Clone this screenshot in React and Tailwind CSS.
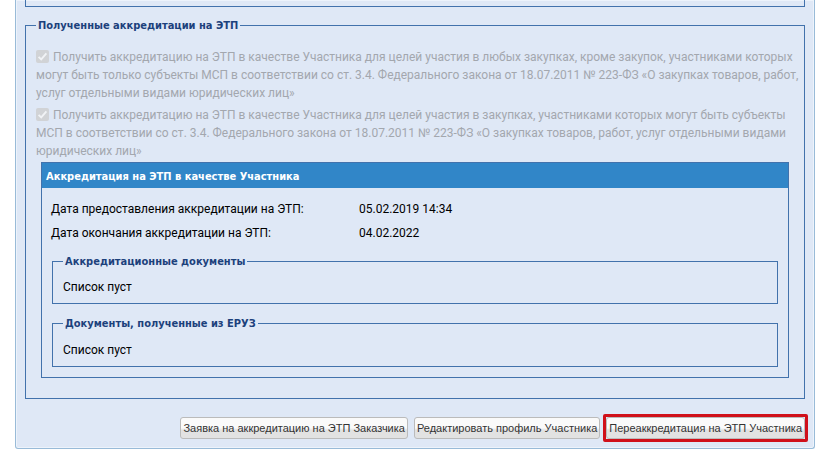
import React from "react";

const accreditations = [
  {
    id: "accr-any",
    lines: [
      "Получить аккредитацию на ЭТП в качестве Участника для целей участия в любых закупках, кроме закупок, участниками которых",
      "могут быть только субъекты МСП в соответствии со ст. 3.4. Федерального закона от 18.07.2011 № 223-ФЗ «О закупках товаров, работ,",
      "услуг отдельными видами юридических лиц»",
    ],
  },
  {
    id: "accr-msp",
    lines: [
      "Получить аккредитацию на ЭТП в качестве Участника для целей участия в закупках, участниками которых могут быть субъекты",
      "МСП в соответствии со ст. 3.4. Федерального закона от 18.07.2011 № 223-ФЗ «О закупках товаров, работ, услуг отдельными видами",
      "юридических лиц»",
    ],
  },
];

function Group({ title, className, children }) {
  return (
    <fieldset className={"min-w-0 border border-[#4272ac] " + className}>
      <legend className="ml-[10px] px-[2px] pt-[2px] font-['DejaVu_Sans_Condensed',sans-serif] text-[11px] leading-[14px] font-bold text-[#1c417c]">
        {title}
      </legend>
      {children}
    </fieldset>
  );
}

function Accreditation({ id, lines }) {
  return (
    <div className="leading-[18px] whitespace-nowrap text-[#a3a7ae]">
      <span className="mr-1 inline-grid size-[13px] align-[-2px]">
        <input
          id={id}
          type="checkbox"
          defaultChecked
          disabled
          className="col-start-1 row-start-1 size-[13px] appearance-none rounded-[2px] bg-[#d1d3d6]"
        />
        <svg viewBox="0 0 13 13" aria-hidden="true" className="pointer-events-none col-start-1 row-start-1 size-[13px]">
          <path d="M2.6 6.8 5.2 9.4 10.4 3.4" fill="none" stroke="#f1f3f6" strokeWidth="1.9" />
        </svg>
      </span>
      <label htmlFor={id}>
        {lines.map((line, i) => (
          <React.Fragment key={line}>
            {i > 0 && <br />}
            {line}
          </React.Fragment>
        ))}
      </label>
    </div>
  );
}

function ActionButton({ children }) {
  return (
    <button
      type="button"
      className="h-[22px] rounded-[3px] border border-[#bbbbbb] bg-linear-to-b from-[#fafafa] from-50% to-[#e2e2e2] to-60% px-[2px] font-['Liberation_Sans',Arial,sans-serif] text-[11px] leading-[18px] whitespace-nowrap text-[#333333]"
    >
      {children}
    </button>
  );
}

export default function App() {
  return (
    <div className="bg-white pr-[6px] pb-[3px] pl-[15px] font-['Roboto',sans-serif] text-[12px] text-black">
      <main className="rounded-b-[3px] border border-t-0 border-[#99bbd8] bg-[#dfe8f6] px-[9px] pb-[6px] shadow-[inset_0_0_0_1px_#edf3fb]">
        <div className="h-[7px] border border-t-0 border-[#4272ac]" />
        <Group title="Полученные аккредитации на ЭТП" className="mt-[10px] pb-[20px]">
          <div className="flex flex-col gap-1 px-[10px] pt-[15px]">
            {accreditations.map((item) => (
              <Accreditation key={item.id} {...item} />
            ))}
          </div>
          <section className="mx-[15px] mt-[2px] border border-[#4272ac] pb-[10px]">
            <h2 className="h-[25px] bg-[#3186c8] px-1 font-['DejaVu_Sans_Condensed',sans-serif] text-[11px] leading-[28px] font-bold text-white">
              Аккредитация на ЭТП в качестве Участника
            </h2>
            <dl className="grid grid-cols-[308px_1fr] px-[9px] pt-[9px] leading-[24px]">
              <dt>Дата предоставления аккредитации на ЭТП:</dt>
              <dd>05.02.2019 14:34</dd>
              <dt>Дата окончания аккредитации на ЭТП:</dt>
              <dd>04.02.2022</dd>
            </dl>
            <div className="flex flex-col gap-[11px] px-[10px] pt-2">
              <Group title="Аккредитационные документы" className="pb-[7px]">
                <p className="px-[10px] pt-[9px] leading-[18px]">Список пуст</p>
              </Group>
              <Group title="Документы, полученные из ЕРУЗ" className="pb-[7px]">
                <p className="px-[10px] pt-[10px] leading-[18px]">Список пуст</p>
              </Group>
            </div>
          </section>
        </Group>
        <div className="-mr-[3px] mt-[15px] flex items-center justify-end">
          <div className="mr-[6px]">
            <ActionButton>Заявка на аккредитацию на ЭТП Заказчика</ActionButton>
          </div>
          <div className="mr-[3px]">
            <ActionButton>Редактировать профиль Участника</ActionButton>
          </div>
          <div className="flex rounded-[2px] border-3 border-[#d0101a]">
            <ActionButton>Переаккредитация на ЭТП Участника</ActionButton>
          </div>
        </div>
      </main>
    </div>
  );
}
